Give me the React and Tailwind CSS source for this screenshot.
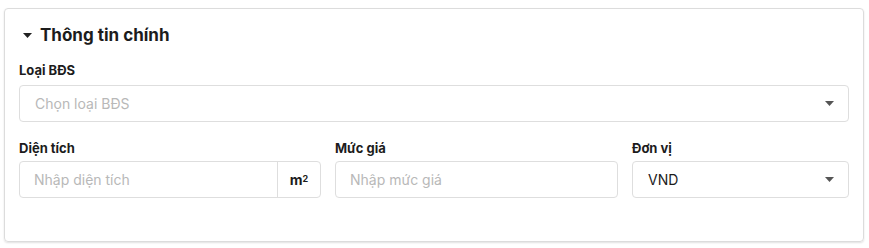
function Caret({ className = '' }) {
    return (
        <svg width="9" height="5" viewBox="0 0 9 5" className={className}>
            <path d="M0 0h9L4.5 5z" fill="currentColor" />
        </svg>
    );
}

function Label({ children, className = 'mb-[6px]' }) {
    return <div className={`text-[13px] font-bold text-[#1c1c1c] leading-[18px] ${className}`}>{children}</div>;
}

export default function App() {
    return (
        <div className="w-[869px] h-[248px] bg-white pt-[8px] px-[4px] font-['Inter',sans-serif]">
            <div className="w-[860px] h-[234px] border border-[#dcdcdc] rounded-[4px] shadow-[0_1px_2px_rgba(0,0,0,0.12)] px-[14px] pt-[15px]">
                {/* Header */}
                <div className="flex items-center gap-[8px] pl-[4px] h-[22px]">
                    <Caret className="text-[#222]" />
                    <h2 className="text-[17px] font-bold text-[#1c1c1c] leading-none">Thông tin chính</h2>
                </div>

                <div className="mt-[15px]">
                    <Label>Loại BĐS</Label>
                    <div className="h-[37px] border border-[#dedede] rounded-[4px] flex items-center justify-between pl-[15px] pr-[14px]">
                        <span className="text-[14px] text-[#b8b8b8]">Chọn loại BĐS</span>
                        <Caret className="text-[#555]" />
                    </div>
                </div>

                <div className="mt-[17px] grid grid-cols-[302px_283px_1fr] gap-x-[14px]">
                    <div>
                        <Label className="mb-[4px]">Diện tích</Label>
                        <div className="h-[37px] border border-[#dedede] rounded-[4px] flex">
                            <div className="flex-1 flex items-center pl-[14px] text-[14px] text-[#b8b8b8]">Nhập diện tích</div>
                            <div className="w-[43px] border-l border-[#dedede] flex items-center justify-center text-[14px] font-bold text-[#1c1c1c]">
                                m<sup className="text-[9px] relative -top-[1px]">2</sup>
                            </div>
                        </div>
                    </div>
                    <div>
                        <Label className="mb-[4px]">Mức giá</Label>
                        <div className="h-[37px] border border-[#dedede] rounded-[4px] flex items-center pl-[14px] text-[14px] text-[#b8b8b8]">
                            Nhập mức giá
                        </div>
                    </div>
                    <div>
                        <Label className="mb-[4px]">Đơn vị</Label>
                        <div className="h-[37px] border border-[#dedede] rounded-[4px] flex items-center justify-between pl-[15px] pr-[14px]">
                            <span className="text-[14px] text-[#1c1c1c]">VND</span>
                            <Caret className="text-[#555]" />
                        </div>
                    </div>
                </div>
            </div>
        </div>
    );
}
